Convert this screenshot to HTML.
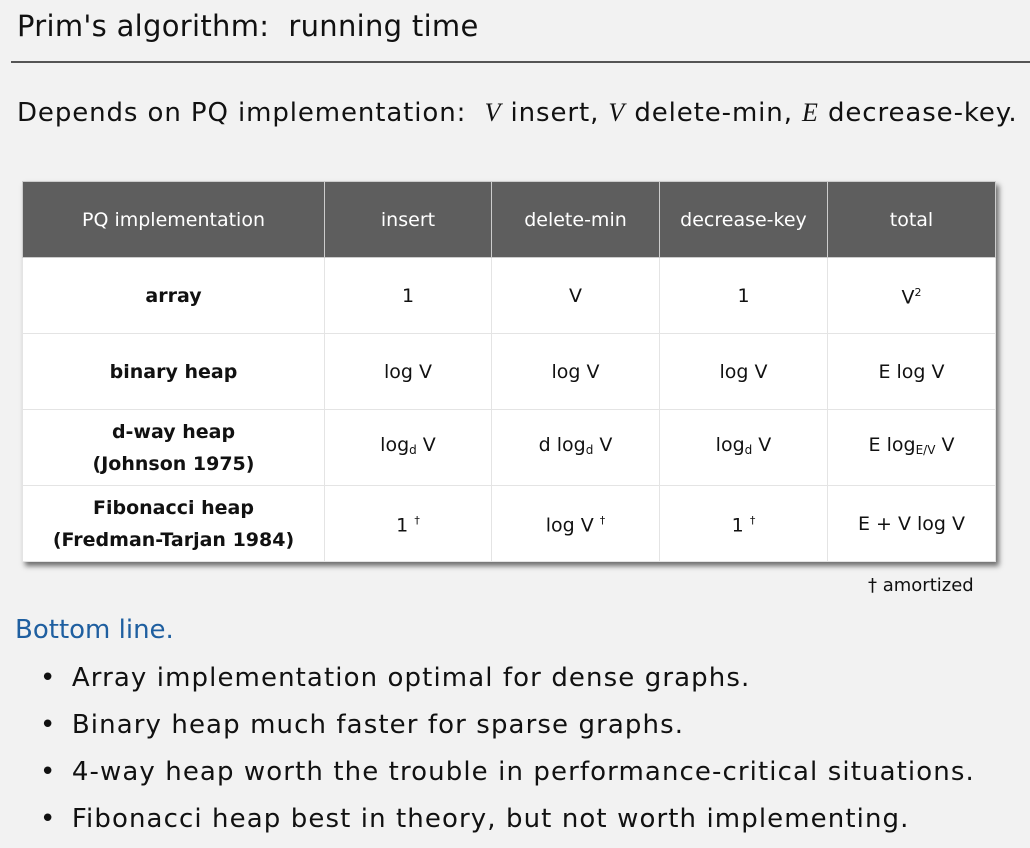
<!DOCTYPE html>
<html><head><meta charset="utf-8"><style>
body{margin:0;width:1030px;height:848px;background:#f2f2f2;font-family:"DejaVu Sans","Liberation Sans",sans-serif;color:#111;position:relative;overflow:hidden}
.a{position:absolute;white-space:nowrap}
table{position:absolute;left:22px;top:181px;border-collapse:collapse;background:#fff;box-shadow:3px 4px 5px rgba(0,0,0,.55);font-size:19px}
td,th{border:1px solid #e4e4e4;text-align:center;padding:0;line-height:32px}
th{background:#5e5e5e;color:#fff;font-weight:normal;height:75px;border-color:#ccc}
td{height:75px}
td.b{font-weight:bold}
sub{font-size:12px;vertical-align:-3px}
sup{font-size:11px}
i{font-family:"Liberation Serif",serif}
</style></head><body>
<div class="a" style="left:17px;top:9px;font-size:29px;letter-spacing:0.3px">Prim's algorithm:&nbsp; running time</div>
<div class="a" style="left:11px;top:61px;width:1019px;height:2px;background:#555"></div>
<div class="a" style="left:17px;top:98px;font-size:26px;letter-spacing:0.9px">Depends on PQ implementation:&nbsp; <i>V</i> insert, <i>V</i> delete-min, <i>E</i> decrease-key.</div>
<table>
<tr><th style="width:301px">PQ implementation</th><th style="width:166px">insert</th><th style="width:167px">delete-min</th><th style="width:167px">decrease-key</th><th style="width:167px">total</th></tr>
<tr><td class="b">array</td><td>1</td><td>V</td><td>1</td><td>V<sup>2</sup></td></tr>
<tr><td class="b">binary heap</td><td>log V</td><td>log V</td><td>log V</td><td>E log V</td></tr>
<tr><td class="b">d-way heap<br>(Johnson 1975)</td><td>log<sub>d</sub> V</td><td>d log<sub>d</sub> V</td><td>log<sub>d</sub> V</td><td>E log<sub>E/V</sub> V</td></tr>
<tr><td class="b">Fibonacci heap<br>(Fredman-Tarjan 1984)</td><td>1 <sup>†</sup></td><td>log V <sup>†</sup></td><td>1 <sup>†</sup></td><td>E + V log V</td></tr>
</table>
<div class="a" style="left:868px;top:575px;font-size:18px">† amortized</div>
<div class="a" style="left:15px;top:615px;font-size:26px;color:#1f5fa0">Bottom line.</div>
<div class="a" style="left:40px;top:655px;font-size:26px;line-height:47px;letter-spacing:1.1px"><span style="letter-spacing:0">•&nbsp;&nbsp;</span>Array implementation optimal for dense graphs.<br><span style="letter-spacing:0">•&nbsp;&nbsp;</span>Binary heap much faster for sparse graphs.<br><span style="letter-spacing:0">•&nbsp;&nbsp;</span>4-way heap worth the trouble in performance-critical situations.<br><span style="letter-spacing:0">•&nbsp;&nbsp;</span>Fibonacci heap best in theory, but not worth implementing.</div>
</body></html>
